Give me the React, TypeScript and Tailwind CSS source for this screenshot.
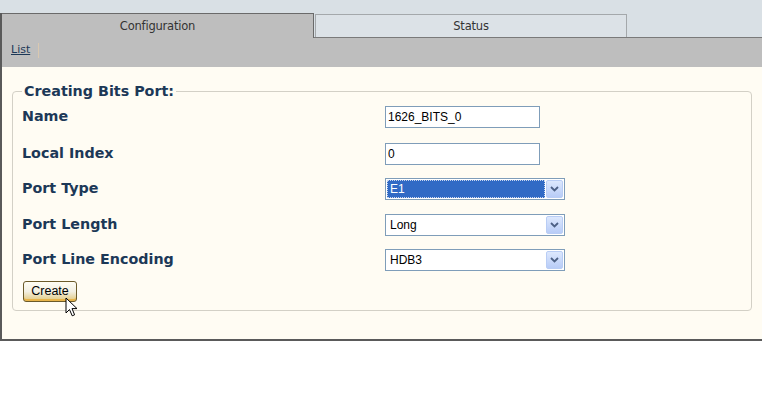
import React from "react";

const labelCls =
  "w-[363px] shrink-0 text-[14.3px] leading-[18px] font-bold text-[#1c3857] font-['DejaVu_Sans',Verdana,sans-serif]";

function TextBox({ value }: { value: string }) {
  return (
    <div className="flex h-[22px] w-[155px] items-center border border-[#7f9db9] bg-white px-[2px] text-[12px] text-black font-['Liberation_Sans',Arial,sans-serif]">
      {value}
    </div>
  );
}

function Chevron() {
  return (
    <div className="flex h-[18px] w-[17px] items-center justify-center rounded-[2px] border border-[#b9cdf5] bg-gradient-to-b from-[#dde8fd] to-[#b8ccf7]">
      <svg width="9" height="6" viewBox="0 0 9 6">
        <path d="M1 1 L4.5 4.5 L8 1" fill="none" stroke="#4d6185" strokeWidth="1.8" />
      </svg>
    </div>
  );
}

function SelectBox({ value, focused }: { value: string; focused?: boolean }) {
  return (
    <div className="flex h-[22px] w-[180px] items-center border border-[#7f9db9] bg-white p-[1px] text-[12px] font-['Liberation_Sans',Arial,sans-serif]">
      <div
        className={
          focused
            ? "flex h-full flex-1 items-center border border-dotted border-[#c8d6f0] bg-[#316ac5] px-[2px] text-white"
            : "flex h-full flex-1 items-center px-[3px] text-black"
        }
      >
        {value}
      </div>
      <div className="ml-[1px]">
        <Chevron />
      </div>
    </div>
  );
}

function Row({ label, children, mt }: { label: string; children: React.ReactNode; mt: string }) {
  return (
    <div className={"flex items-start " + mt}>
      <div className={labelCls + " mt-[1px]"}>{label}</div>
      {children}
    </div>
  );
}

export default function App() {
  return (
    <div className="h-[417px] w-[762px] overflow-hidden bg-white font-['DejaVu_Sans',Verdana,sans-serif]">
      <div className="h-[13px] bg-[#d9e0e5]" />
      <div className="border-l-2 border-b-2 border-[#5a5a5a]">
        {/* tabs */}
        <div className="flex h-[25px] bg-[#d9e0e5]">
          <div className="flex w-[312px] items-center justify-center border-t border-r border-[#6a6a6a] bg-[#bebebe] pt-[2px] text-[11.5px] tracking-[-0.2px] text-[#333]">
            Configuration
          </div>
          <div className="flex flex-1 flex-col">
            <div className="flex flex-1 pl-[1px] pt-[1px]">
              <div className="flex w-[312px] items-center justify-center border-t border-l border-r border-[#a4a8ab] bg-[#dce2e7] pt-[1px] text-[11.5px] tracking-[-0.2px] text-[#333]">
                Status
              </div>
            </div>
            <div className="h-px bg-[#7a7a7a]" />
          </div>
        </div>
        {/* sub bar */}
        <div className="flex h-[29px] items-start bg-[#bebebe] pl-[9px] pt-[4px]">
          <span className="text-[11px] text-[#1c3857] underline">List</span>
          <div className="ml-[8px] mt-[1px] h-[15px] w-px bg-[#d9c8b0]" />
        </div>
        {/* content */}
        <div className="h-[272px] bg-[#fffcf3] pt-[15px] pl-[10px] pr-[10px]">
          <fieldset className="rounded-[4px] border border-[#d3d0c6] pb-[8px] pl-[9px]">
            <legend className="px-[2px] text-[14.3px] leading-[18px] font-bold text-[#1c3857]">
              Creating Bits Port:
            </legend>
            <Row label="Name" mt="mt-[6px]">
              <TextBox value="1626_BITS_0" />
            </Row>
            <Row label="Local Index" mt="mt-[15px]">
              <TextBox value="0" />
            </Row>
            <Row label="Port Type" mt="mt-[13px]">
              <SelectBox value="E1" focused />
            </Row>
            <Row label="Port Length" mt="mt-[14px]">
              <SelectBox value="Long" />
            </Row>
            <Row label="Port Line Encoding" mt="mt-[13px]">
              <SelectBox value="HDB3" />
            </Row>
            <div className="relative mt-[10px]">
              <button className="ml-[1px] flex h-[21px] w-[54px] items-center justify-center rounded-[3px] border border-[#6b5a2a] bg-gradient-to-b from-[#fffdf4] via-[#f2efe2] to-[#e2c87a] text-[12.5px] text-black font-['Liberation_Sans',Arial,sans-serif] shadow-[inset_0_-2px_0_#e8b44a]">
                Create
              </button>
              <svg
                className="absolute left-[43px] top-[16px]"
                width="14"
                height="21"
                viewBox="0 0 14 21"
              >
                <path
                  d="M1 1 L1 16 L4.5 12.5 L7.2 18.8 L9.6 17.8 L7 11.6 L12 11.6 Z"
                  fill="#fff"
                  stroke="#000"
                  strokeWidth="1"
                  strokeLinejoin="miter"
                />
              </svg>
            </div>
          </fieldset>
        </div>
      </div>
    </div>
  );
}
